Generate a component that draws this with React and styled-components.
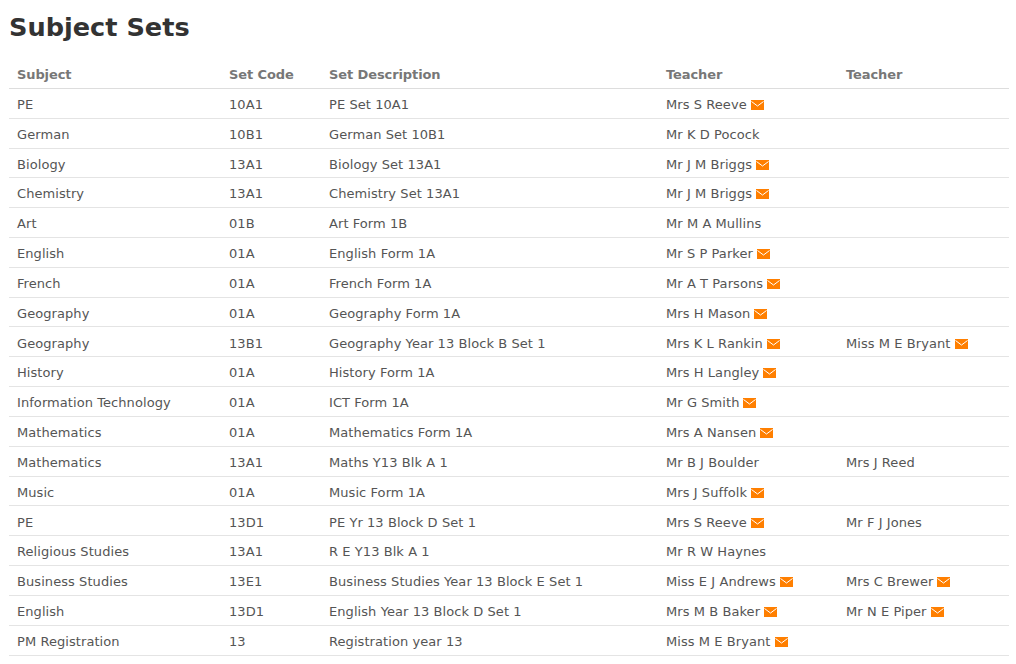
import React from "react";
import styled, { createGlobalStyle } from "styled-components";

const GlobalStyle = createGlobalStyle`
  html, body {
    margin: 0;
    padding: 0;
    background: #fff;
    font-family: "DejaVu Sans", Verdana, sans-serif;
    color: #555;
  }
`;

const Page = styled.div`
  padding: 0 7px 0 9px;
`;

const Title = styled.h1`
  margin: 0;
  padding-top: 12px;
  height: 53.36px;
  box-sizing: border-box;
  font-size: 25.6px;
  line-height: 31px;
  font-weight: 700;
  color: #333;
`;

const Table = styled.table`
  width: 1000px;
  border-collapse: collapse;
  table-layout: fixed;
  font-size: 13px;
  letter-spacing: 0.07px;
`;

const HeadCell = styled.th`
  height: 35px;
  padding: 8px 8px 0;
  box-sizing: border-box;
  text-align: left;
  font-size: 13px;
  font-weight: 700;
  letter-spacing: -0.1px;
  color: #777;
  border-bottom: 1px solid #ddd;
  width: ${({ $w }) => $w}px;
`;

const Cell = styled.td`
  height: 29.83px;
  padding: 2.3px 8px 0;
  box-sizing: border-box;
  color: #555;
  border-bottom: 1px solid #e4e4e4;
  white-space: nowrap;
`;

const Mail = styled.svg`
  display: inline-block;
  width: 13px;
  height: 10px;
  margin-left: 4px;
  vertical-align: -1px;
`;

const MailIcon = () => (
  <Mail viewBox="0 0 13 10">
    <rect width="13" height="10" fill="#ff7f00" />
    <path d="M0.5 1.5 L6.5 6 L12.5 1.5" fill="none" stroke="#fff" strokeWidth="1" />
  </Mail>
);

const Teacher = ({ name, mail }) =>
  name ? (
    <>
      {name}
      {mail && <MailIcon />}
    </>
  ) : null;

const columns = [
  ["Subject", 212],
  ["Set Code", 100],
  ["Set Description", 337],
  ["Teacher", 180],
  ["Teacher", 171],
];

const rows = [
  ["PE", "10A1", "PE Set 10A1", "Mrs S Reeve", true],
  ["German", "10B1", "German Set 10B1", "Mr K D Pocock", false],
  ["Biology", "13A1", "Biology Set 13A1", "Mr J M Briggs", true],
  ["Chemistry", "13A1", "Chemistry Set 13A1", "Mr J M Briggs", true],
  ["Art", "01B", "Art Form 1B", "Mr M A Mullins", false],
  ["English", "01A", "English Form 1A", "Mr S P Parker", true],
  ["French", "01A", "French Form 1A", "Mr A T Parsons", true],
  ["Geography", "01A", "Geography Form 1A", "Mrs H Mason", true],
  ["Geography", "13B1", "Geography Year 13 Block B Set 1", "Mrs K L Rankin", true, "Miss M E Bryant", true],
  ["History", "01A", "History Form 1A", "Mrs H Langley", true],
  ["Information Technology", "01A", "ICT Form 1A", "Mr G Smith", true],
  ["Mathematics", "01A", "Mathematics Form 1A", "Mrs A Nansen", true],
  ["Mathematics", "13A1", "Maths Y13 Blk A 1", "Mr B J Boulder", false, "Mrs J Reed", false],
  ["Music", "01A", "Music Form 1A", "Mrs J Suffolk", true],
  ["PE", "13D1", "PE Yr 13 Block D Set 1", "Mrs S Reeve", true, "Mr F J Jones", false],
  ["Religious Studies", "13A1", "R E Y13 Blk A 1", "Mr R W Haynes", false],
  ["Business Studies", "13E1", "Business Studies Year 13 Block E Set 1", "Miss E J Andrews", true, "Mrs C Brewer", true],
  ["English", "13D1", "English Year 13 Block D Set 1", "Mrs M B Baker", true, "Mr N E Piper", true],
  ["PM Registration", "13", "Registration year 13", "Miss M E Bryant", true],
];

export default function App() {
  return (
    <Page>
      <GlobalStyle />
      <Title>Subject Sets</Title>
      <Table>
        <thead>
          <tr>
            {columns.map(([label, w], i) => (
              <HeadCell key={i} $w={w}>{label}</HeadCell>
            ))}
          </tr>
        </thead>
        <tbody>
          {rows.map(([subject, code, desc, t1, m1, t2, m2], i) => (
            <tr key={i}>
              <Cell>{subject}</Cell>
              <Cell>{code}</Cell>
              <Cell>{desc}</Cell>
              <Cell><Teacher name={t1} mail={m1} /></Cell>
              <Cell><Teacher name={t2} mail={m2} /></Cell>
            </tr>
          ))}
        </tbody>
      </Table>
    </Page>
  );
}
